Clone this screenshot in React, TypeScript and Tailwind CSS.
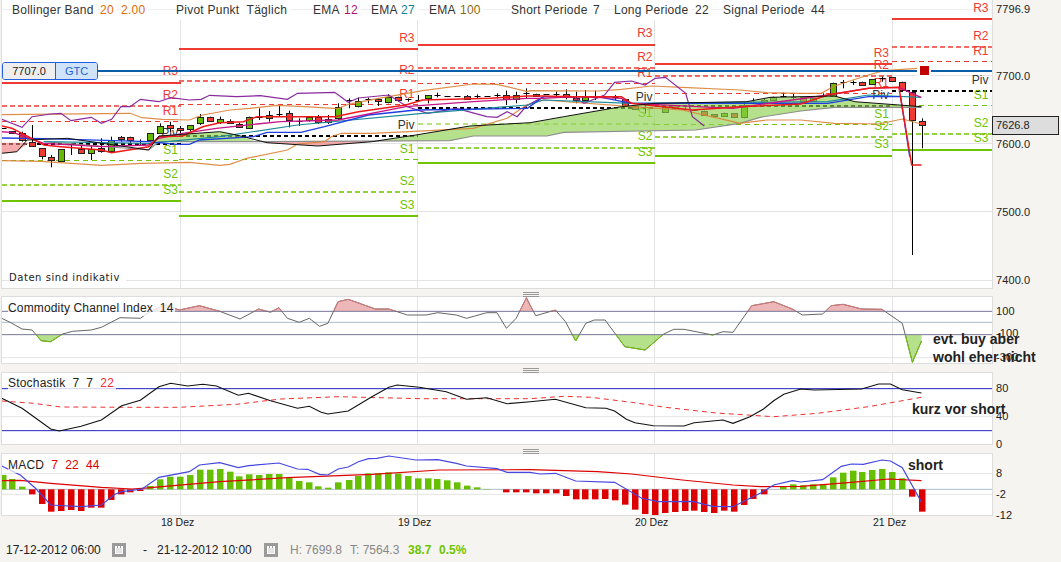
import React from "react";

const lx = (x: number) => x / 2.958;
const rx = (x: number) => 530 + x / 2.955;
const my = (y: number) => y / 3;
const sy = (y: number) => 285 + y / 3;

function pts(l: number[], r: number[], fy: (y: number) => number) {
  const o: string[] = [];
  for (let i = 0; i < l.length; i += 2) o.push(`${lx(l[i]).toFixed(1)},${fy(l[i + 1]).toFixed(1)}`);
  for (let i = 0; i < r.length; i += 2) o.push(`${rx(r[i]).toFixed(1)},${fy(r[i + 1]).toFixed(1)}`);
  return o.join(" ");
}

const RED = "#ef3b33";
const GREEN = "#6fc400";
const GRID = "#e4e4e4";

type Day = { x1: number; x2: number; lab: number; ys: number[]; ly: number[] };
const days: Day[] = [
  { x1: 2, x2: 181, lab: 178, ys: [83, 106, 121.5, 144, 160.5, 185, 201], ly: [71, 95, 111, 133, 150, 174, 190] },
  { x1: 179, x2: 418, lab: 414.5, ys: [49, 81, 104.5, 136, 159.5, 192, 216], ly: [38, 70, 94, 125, 149, 181, 205] },
  { x1: 418, x2: 655, lab: 652.5, ys: [45, 68, 83.5, 108, 124, 148, 163], ly: [33, 57, 73, 97, 113, 136, 152] },
  { x1: 655, x2: 892, lab: 889, ys: [64, 76, 93.5, 106, 124.5, 137, 156], ly: [53, 65, 83, 95, 114, 126, 144] },
  { x1: 892, x2: 992, lab: 988.5, ys: [19, 47, 61.5, 91, 105.5, 134, 150], ly: [8, 36, 51, 80, 95, 123, 138] },
];
const labels = ["R3", "R2", "R1", "Piv", "S1", "S2", "S3"];
const labelCol = [RED, RED, RED, "#333333", GREEN, GREEN, GREEN];
const lineCol = [RED, RED, RED, "#000000", GREEN, GREEN, GREEN];
const lineW = [2, 1.5, 1, 2, 1, 1.5, 2];
const lineDash = [undefined, "5 3", "5 4", "4 3", "5 4", "5 3", undefined];

type C = [number, number, number, number, number, string];
const candlesL: C[] = [
  [8, 385, 385, 385, 385, "k"], [36, 393, 400, 393, 400, "r"], [65, 395, 425, 400, 420, "r"], [94, 375, 440, 425, 438, "r"],
  [123, 445, 478, 445, 470, "r"], [152, 465, 502, 472, 480, "r"], [181, 448, 485, 448, 483, "g"], [210, 430, 465, 433, 433, "k"],
  [240, 430, 462, 448, 460, "r"], [269, 435, 480, 448, 460, "g"], [298, 415, 458, 445, 455, "r"], [327, 410, 455, 420, 452, "g"],
  [357, 408, 425, 412, 418, "r"], [386, 410, 430, 412, 420, "r"], [415, 418, 435, 424, 424, "k"], [445, 400, 425, 400, 422, "g"],
  [474, 370, 400, 378, 398, "g"], [503, 365, 395, 376, 386, "r"], [533, 378, 400, 385, 392, "r"], [562, 376, 395, 376, 388, "g"],
  [592, 342, 375, 352, 370, "g"], [621, 350, 362, 350, 362, "r"], [650, 350, 372, 358, 366, "g"], [679, 358, 372, 362, 368, "r"],
  [708, 368, 382, 373, 381, "r"], [738, 350, 385, 350, 382, "g"], [767, 325, 360, 352, 352, "k"], [796, 333, 365, 346, 354, "g"],
  [825, 317, 350, 342, 342, "k"], [855, 332, 382, 340, 360, "r"], [884, 355, 378, 362, 362, "k"], [913, 350, 365, 352, 360, "g"],
  [942, 345, 372, 352, 368, "r"], [971, 345, 372, 358, 368, "r"], [1001, 310, 360, 320, 352, "g"], [1031, 295, 325, 300, 300, "k"],
  [1060, 293, 322, 302, 318, "g"], [1089, 293, 310, 296, 296, "k"], [1118, 295, 318, 298, 305, "r"], [1148, 283, 310, 290, 304, "g"],
  [1177, 290, 305, 290, 300, "r"], [1206, 295, 305, 298, 298, "k"], [1235, 285, 303, 300, 300, "k"], [1265, 285, 310, 286, 296, "g"],
  [1294, 278, 292, 285, 285, "k"], [1323, 287, 287, 287, 287, "k"], [1352, 288, 288, 288, 288, "k"], [1381, 285, 298, 287, 295, "r"],
  [1410, 283, 295, 288, 288, "k"], [1440, 289, 289, 289, 289, "k"], [1469, 280, 295, 285, 285, "k"], [1498, 272, 315, 285, 298, "r"],
  [1527, 275, 310, 285, 297, "g"], [1557, 265, 295, 280, 280, "k"],
];
const candlesR: C[] = [
  [17, 281, 288, 281, 288, "r"], [46, 282, 282, 282, 282, "k"], [76, 275, 290, 282, 282, "k"], [105, 268, 298, 281, 290, "r"],
  [135, 275, 310, 295, 302, "r"], [164, 270, 305, 292, 302, "g"], [193, 272, 300, 288, 288, "k"], [222, 288, 288, 288, 288, "k"],
  [251, 285, 300, 290, 290, "k"], [280, 298, 318, 298, 318, "r"], [310, 318, 328, 318, 328, "r"], [339, 310, 340, 322, 322, "k"],
  [398, 320, 335, 320, 335, "g"], [427, 316, 324, 316, 324, "r"], [457, 315, 332, 328, 328, "k"], [486, 330, 330, 330, 330, "k"],
  [515, 332, 343, 332, 343, "r"], [544, 343, 349, 343, 349, "r"], [573, 338, 346, 338, 346, "g"], [602, 340, 352, 340, 352, "r"],
  [632, 310, 355, 315, 352, "g"], [660, 295, 310, 305, 305, "k"], [690, 295, 310, 300, 306, "g"], [719, 290, 300, 290, 300, "g"],
  [748, 278, 292, 288, 288, "k"], [777, 282, 298, 290, 290, "k"], [806, 290, 306, 290, 306, "r"], [836, 295, 305, 295, 305, "g"],
  [866, 280, 292, 288, 288, "k"], [895, 248, 288, 248, 288, "g"], [924, 240, 265, 245, 245, "k"], [953, 242, 255, 245, 245, "k"],
  [982, 245, 258, 247, 255, "r"], [1011, 238, 252, 238, 252, "g"], [1040, 230, 245, 235, 235, "k"], [1069, 232, 245, 232, 245, "r"],
  [1098, 245, 275, 245, 270, "r"], [1128, 270, 765, 275, 358, "r"], [1157, 355, 445, 362, 373, "r"],
];

const mainLines: { l: number[]; r: number[]; c: string; w: number }[] = [
  { c: "#db8236", w: 1.2, l: [5, 344, 385, 340, 420, 353, 480, 358, 560, 360, 600, 345, 680, 330, 740, 325, 820, 316, 900, 320, 1000, 326, 1030, 313, 1120, 295, 1250, 272, 1400, 252, 1470, 253, 1560, 275], r: [0, 272, 200, 273, 270, 268, 360, 258, 450, 262, 620, 270, 700, 278, 800, 280, 860, 280, 900, 258, 1000, 225, 1045, 212, 1145, 205] },
  { c: "#db8236", w: 1.2, l: [5, 482, 120, 484, 300, 496, 420, 490, 560, 487, 650, 496, 680, 493, 730, 475, 850, 450, 880, 432, 960, 425, 980, 410, 1010, 400, 1100, 400, 1210, 395, 1400, 385, 1500, 355, 1557, 315], r: [40, 300, 300, 320, 450, 330, 600, 365, 620, 370, 700, 360, 800, 360, 900, 370, 1030, 372, 1100, 357, 1157, 372] },
  { c: "#8a2a9e", w: 1.2, l: [5, 358, 65, 382, 95, 350, 150, 342, 180, 340, 210, 362, 270, 352, 300, 370, 330, 358, 358, 320, 385, 320, 415, 298, 470, 305, 505, 293, 560, 300, 595, 298, 620, 286, 700, 290, 770, 287, 850, 298, 880, 280, 990, 277, 1030, 307, 1060, 294, 1150, 285, 1205, 320, 1265, 340, 1350, 325, 1440, 350, 1470, 352, 1500, 335, 1530, 350, 1557, 318], r: [40, 290, 75, 290, 130, 292, 160, 310, 220, 285, 250, 247, 300, 243, 340, 255, 370, 235, 400, 232, 460, 280, 480, 350, 515, 378] },
  { c: "#1d8a9a", w: 1.2, l: [130, 425, 440, 430, 650, 410, 880, 375, 1250, 340, 1560, 315], r: [40, 300, 300, 310, 880, 305, 1000, 285, 1157, 292] },
  { c: "#1f3fe0", w: 1.3, l: [5, 414, 130, 416, 440, 425, 520, 433, 560, 433, 590, 420, 750, 410, 790, 397, 890, 397, 960, 380, 1090, 345, 1230, 330, 1560, 325], r: [40, 290, 100, 290, 200, 290, 300, 310, 560, 310, 880, 310, 950, 298, 1000, 290, 1095, 290, 1122, 470] },
  { c: "#c71585", w: 1.3, l: [5, 395, 40, 398, 130, 430, 300, 440, 440, 435, 470, 415, 540, 400, 640, 385, 760, 372, 830, 365, 1000, 360, 1200, 320, 1400, 305, 1560, 295], r: [40, 295, 130, 290, 270, 295, 300, 310, 600, 325, 880, 285, 1000, 265, 1090, 262, 1155, 292] },
  { c: "#f01818", w: 1.5, l: [5, 378, 35, 385, 65, 400, 130, 435, 180, 440, 300, 450, 330, 458, 440, 440, 470, 410, 540, 408, 600, 380, 650, 368, 720, 365, 760, 350, 990, 350, 1060, 335, 1200, 315, 1250, 300, 1450, 295, 1560, 288], r: [40, 288, 120, 290, 270, 290, 300, 310, 480, 330, 620, 320, 800, 312, 880, 285, 1000, 265, 1090, 262, 1128, 495, 1157, 495] },
];

const cci = {
  l: [5, 100, 30, 112, 65, 132, 95, 135, 122, 167, 150, 170, 185, 147, 215, 139, 270, 135, 300, 127, 355, 98, 415, 100, 445, 79, 490, 60, 530, 75, 590, 62, 650, 79, 710, 102, 765, 72, 800, 82, 825, 68, 850, 100, 885, 112, 915, 100, 945, 124, 970, 115, 1000, 50, 1030, 43, 1110, 72, 1150, 72, 1205, 90, 1260, 90, 1295, 83, 1350, 90, 1380, 100, 1440, 83, 1470, 83, 1498, 130, 1527, 100, 1557, 38],
  r: [0, 60, 17, 92, 75, 75, 105, 110, 135, 168, 165, 115, 190, 105, 222, 105, 280, 185, 340, 195, 395, 147, 425, 133, 455, 133, 540, 150, 570, 140, 600, 142, 655, 62, 720, 50, 775, 72, 805, 90, 865, 87, 890, 62, 925, 58, 980, 72, 1040, 73, 1100, 115, 1130, 232, 1157, 168],
};

const macdL: [number, number][] = [[8, 570], [36, 582], [65, 605], [94, 628], [123, 657], [152, 680], [181, 678], [210, 675], [240, 678], [269, 668], [298, 668], [327, 645], [357, 628], [386, 622], [415, 618], [445, 603], [474, 583], [503, 575], [533, 575], [562, 570], [592, 554], [621, 554], [650, 552], [679, 560], [708, 574], [738, 568], [767, 570], [796, 567], [825, 567], [855, 578], [884, 588], [913, 592], [942, 604], [971, 608], [1001, 592], [1031, 585], [1060, 573], [1089, 565], [1118, 565], [1148, 562], [1177, 566], [1206, 573], [1235, 580], [1265, 580], [1294, 582], [1323, 586], [1352, 592], [1381, 602], [1410, 607], [1440, 612], [1498, 622], [1527, 622], [1557, 622]];
const macdR: [number, number][] = [[17, 625], [46, 625], [76, 625], [105, 633], [135, 643], [164, 643], [193, 643], [222, 642], [251, 646], [280, 659], [310, 674], [339, 687], [369, 690], [398, 684], [427, 681], [457, 678], [486, 677], [515, 681], [544, 684], [573, 677], [602, 680], [632, 660], [660, 642], [690, 628], [748, 603], [777, 598], [806, 601], [836, 598], [865, 597], [895, 577], [924, 563], [953, 557], [982, 561], [1011, 555], [1040, 552], [1069, 561], [1098, 580], [1128, 635], [1157, 680]];

function Candle({ c, fx }: { c: C; fx: (x: number) => number }) {
  const x = Math.round(fx(c[0])) + 0.5;
  const [, wt, wb, bt, bb, k] = c;
  return (
    <g>
      {wb > wt && <line x1={x} x2={x} y1={my(wt)} y2={my(wb)} stroke="#000" strokeWidth="1" />}
      {k === "k" ? (
        <line x1={x - 3} x2={x + 3} y1={Math.round(my(bt)) + 0.5} y2={Math.round(my(bt)) + 0.5} stroke="#000" strokeWidth="1" />
      ) : (
        <rect x={x - 3} y={Math.round(my(bt)) + 0.5} width="6" height={Math.max(2, Math.round(my(bb) - my(bt)))} fill={k === "r" ? RED : "#66bb00"} stroke="#222" strokeWidth="1" />
      )}
    </g>
  );
}

const vgrid = [180.5, 417.5, 654.5, 892.5];

function VGrid({ y1, y2 }: { y1: number; y2: number }) {
  return (
    <>
      {vgrid.map((x) => (
        <line key={x} x1={x} x2={x} y1={y1} y2={y2} stroke={GRID} />
      ))}
    </>
  );
}

function AxisLabel({ top, text }: { top: number; text: string }) {
  return (
    <span className="absolute left-[4px] -translate-y-1/2 text-[11px] leading-none tracking-[0.1px] text-[#222] whitespace-nowrap" style={{ top }}>
      {text}
    </span>
  );
}

function Cell({ className, children }: { className: string; children: React.ReactNode }) {
  return (
    <div className={className}>
      <span className="bg-white pr-[3px]">{children}</span>
    </div>
  );
}

function Grip() {
  return (
    <div className="absolute left-[521px] -top-[5px] flex w-[16px] flex-col gap-[1px]">
      <div className="h-px bg-[#999]" />
      <div className="h-px bg-[#999]" />
      <div className="h-px bg-[#999]" />
    </div>
  );
}

function MainChart() {
  return (
    <svg className="absolute inset-0 h-full w-full" viewBox="2 0 990 288">
      <line x1="2" x2="992" y1="9.5" y2="9.5" stroke="#eeeeee" />
      {[75.5, 143.5, 211.5, 280.5].map((y) => (
        <line key={y} x1="2" x2="992" y1={y} y2={y} stroke={GRID} />
      ))}
      <VGrid y1={20} y2={288} />
      {days.map((d, i) =>
        d.ys.map((y, j) => (
          <line key={`${i}-${j}`} x1={d.x1} x2={d.x2} y1={y} y2={y} stroke={lineCol[j]} strokeWidth={lineW[j]} strokeDasharray={lineDash[j]} />
        )),
      )}
      {days.map((d, i) =>
        d.ly.map((y, j) => (
          <text key={`${i}-${j}`} x={d.lab} y={y} textAnchor="end" dominantBaseline="central" fontSize="12" fill={labelCol[j]}>
            {labels[j]}
          </text>
        )),
      )}
      {candlesL.map((c, i) => (
        <Candle key={i} c={c} fx={lx} />
      ))}
      {candlesR.map((c, i) => (
        <Candle key={i} c={c} fx={rx} />
      ))}
      <polygon points={pts([5, 428, 85, 428, 50, 455, 20, 460, 5, 460], [], my)} fill="#f07f7f" fillOpacity="0.65" />
      <polygon points={pts([790, 428, 940, 438, 1100, 425, 1110, 423, 790, 424], [], my)} fill="#f07f7f" fillOpacity="0.65" />
      <polygon points={pts([460, 425, 470, 408, 650, 395, 700, 405, 760, 425], [], my)} fill="#8fd14f" fillOpacity="0.65" />
      <polygon
        points={pts([1110, 423, 1230, 405, 1390, 378, 1568, 368], [100, 350, 270, 320, 370, 310, 640, 305, 710, 292, 900, 288, 960, 305, 1157, 320, 1157, 322, 900, 322, 800, 333, 680, 352, 620, 370, 490, 390, 100, 397, 50, 408, 0, 408], my) + ` ${lx(1400)},${my(408)} ${lx(1330)},${my(422)}`}
        fill="#8fd14f"
        fillOpacity="0.65"
      />
      <polyline points={pts([130, 425, 440, 450, 470, 425, 760, 425, 1330, 422, 1400, 408, 1568, 408], [0, 408, 50, 408, 100, 397, 490, 390, 620, 370, 680, 352, 800, 333, 900, 322, 1157, 322], my)} fill="none" stroke="#8d8d8d" strokeWidth="1.2" />
      {mainLines.map((m, i) => (
        <polyline key={i} points={pts(m.l, m.r, my)} fill="none" stroke={m.c} strokeWidth={m.w} strokeOpacity={i < 2 ? 0.9 : 1} />
      ))}
      <polyline points={pts([5, 460, 50, 455, 80, 420, 200, 415, 440, 450, 470, 408, 650, 395, 700, 405, 790, 428, 940, 438, 1100, 425, 1230, 405, 1390, 378, 1568, 368], [100, 350, 270, 320, 370, 310, 640, 305, 710, 292, 900, 288, 960, 305, 1157, 320], my)} fill="none" stroke="#111" strokeWidth="1" />
      <line x1="98" x2="917" y1="71" y2="71" stroke="#0a5ea8" strokeWidth="2" />
      <line x1="931" x2="992" y1="71" y2="71" stroke="#0a5ea8" strokeWidth="2" />
      <rect x="917" y="64" width="14" height="13" fill="#ffffff" />
      <rect x="920" y="66" width="9" height="9" fill="#c40000" />
    </svg>
  );
}

function CciChart() {
  const line = pts(cci.l, cci.r, sy);
  const first = `${lx(5).toFixed(1)},`;
  const last = `${rx(1157).toFixed(1)},`;
  const closedUp = `${first}${sy(79)} ${line} ${last}${sy(79)}`;
  const closedDown = `${first}${sy(149)} ${line} ${last}${sy(149)}`;
  return (
    <svg className="absolute inset-0 h-full w-full" viewBox="2 297 990 66">
      <defs>
        <clipPath id="cciUp"><rect x="0" y="290" width="992" height={sy(79) - 290} /></clipPath>
        <clipPath id="cciDown"><rect x="0" y={sy(149)} width="992" height="40" /></clipPath>
      </defs>
      <VGrid y1={297} y2={363} />
      <line x1="2" x2="992" y1={sy(218)} y2={sy(218)} stroke={GRID} />
      <polygon points={closedUp} fill="#e07b7b" fillOpacity="0.55" clipPath="url(#cciUp)" />
      <polygon points={closedDown} fill="#8fd14f" fillOpacity="0.65" clipPath="url(#cciDown)" />
      <line x1="2" x2="992" y1={sy(79)} y2={sy(79)} stroke="#77779a" />
      <line x1="2" x2="992" y1={sy(112)} y2={sy(112)} stroke="#aebccb" />
      <line x1="2" x2="992" y1={sy(149)} y2={sy(149)} stroke="#77779a" />
      <polyline points={line} fill="none" stroke="#666" strokeWidth="1" />
      <polyline points={line} fill="none" stroke="#d87a7a" strokeWidth="1" clipPath="url(#cciUp)" />
      <polyline points={line} fill="none" stroke="#6fc400" strokeWidth="1" clipPath="url(#cciDown)" />
    </svg>
  );
}

function StochChart() {
  return (
    <svg className="absolute inset-0 h-full w-full" viewBox="2 373 990 71">
      <VGrid y1={373} y2={444} />
      <line x1="2" x2="992" y1={sy(395)} y2={sy(395)} stroke={GRID} />
      <line x1="2" x2="992" y1={sy(311)} y2={sy(311)} stroke="#2424c0" />
      <line x1="2" x2="992" y1={sy(437)} y2={sy(437)} stroke="#2424c0" />
      <polyline points={pts([5, 348, 100, 355, 180, 366, 400, 367, 530, 367, 700, 358, 830, 342, 1000, 335, 1250, 341, 1568, 341], [100, 334, 180, 337, 300, 352, 400, 367, 550, 384, 720, 395, 850, 385, 1000, 365, 1157, 337], sy)} fill="none" stroke="#f03030" strokeDasharray="5 4" />
      <polyline points={pts([5, 340, 65, 370, 100, 395, 150, 432, 175, 438, 240, 424, 300, 405, 360, 362, 415, 346, 470, 305, 505, 295, 555, 303, 600, 298, 640, 303, 705, 331, 735, 325, 800, 347, 880, 370, 915, 364, 950, 382, 970, 387, 1030, 378, 1100, 335, 1150, 307, 1175, 300, 1240, 307, 1320, 320, 1380, 343, 1440, 338, 1500, 356, 1568, 350], [75, 343, 165, 368, 225, 370, 250, 378, 285, 403, 310, 413, 365, 422, 455, 423, 485, 413, 570, 405, 600, 415, 650, 395, 690, 372, 720, 347, 750, 328, 800, 312, 840, 315, 980, 312, 1030, 297, 1065, 297, 1100, 314, 1157, 324], sy)} fill="none" stroke="#111" strokeWidth="1.1" />
    </svg>
  );
}

function Bar({ x, top }: { x: number; top: number }) {
  const base = sy(613);
  const t = sy(top);
  const up = t < base;
  const xx = Math.round(x) - 3;
  return <rect x={xx} y={up ? t : base} width="6.5" height={Math.abs(base - t)} fill={up ? "#66bf00" : "#dd0000"} />;
}

function MacdChart() {
  return (
    <svg className="absolute inset-0 h-full w-full" viewBox="2 454 990 61">
      <VGrid y1={454} y2={515} />
      <line x1="2" x2="992" y1={sy(566)} y2={sy(566)} stroke={GRID} />
      <line x1="2" x2="992" y1={sy(628)} y2={sy(628)} stroke={GRID} />
      <line x1="2" x2="992" y1={sy(613)} y2={sy(613)} stroke="#aebccb" />
      {macdL.map(([x, t], i) => (
        <Bar key={i} x={lx(x)} top={t} />
      ))}
      {macdR.map(([x, t], i) => (
        <Bar key={i} x={rx(x)} top={t} />
      ))}
      <polyline points={pts([5, 587, 60, 586, 150, 595, 300, 607, 390, 612, 420, 610, 650, 590, 850, 578, 1100, 568, 1300, 555, 1568, 554], [200, 560, 300, 567, 450, 585, 600, 600, 680, 605, 800, 604, 950, 592, 1060, 582, 1157, 587], sy)} fill="none" stroke="#dd0000" strokeWidth="1.2" />
      <polyline points={pts([5, 543, 60, 570, 105, 610, 150, 660, 240, 665, 300, 660, 340, 628, 360, 620, 420, 612, 470, 577, 560, 560, 590, 540, 650, 533, 705, 548, 735, 542, 825, 534, 880, 552, 910, 553, 945, 568, 970, 570, 1000, 552, 1030, 546, 1060, 530, 1090, 521, 1115, 520, 1150, 513, 1230, 525, 1295, 524, 1350, 535, 1380, 543, 1470, 551, 1500, 562, 1568, 562], [30, 567, 75, 565, 135, 588, 250, 592, 330, 640, 380, 650, 480, 649, 540, 664, 600, 665, 680, 625, 720, 600, 775, 587, 800, 591, 865, 584, 920, 544, 950, 537, 985, 538, 1040, 525, 1065, 528, 1100, 548, 1157, 652], sy)} fill="none" stroke="#4646e0" strokeWidth="1.2" />
    </svg>
  );
}

function CalendarIcon() {
  return (
    <svg width="14" height="14" viewBox="0 0 14 14" className="shrink-0">
      <rect x="0" y="0" width="14" height="14" fill="#9a9a9a" />
      <rect x="3" y="3" width="8" height="8" fill="#ffffff" />
      <rect x="5" y="3" width="1" height="2" fill="#9a9a9a" />
      <rect x="8" y="3" width="1" height="2" fill="#9a9a9a" />
      <rect x="4" y="5" width="6" height="5" fill="#e4e4e4" />
    </svg>
  );
}

export default function App() {
  return (
    <div className="relative flex h-[562px] w-[1061px] flex-col overflow-hidden bg-[#f5f4f1] font-['Liberation_Sans',Arial,sans-serif] text-[#222]">
      {/* main */}
      <div className="flex h-[288px] pl-[2px]">
        <div className="relative h-full w-[990px] bg-white ring-1 ring-[#dddddd]">
          <MainChart />
          <div className="absolute left-[10px] top-0 flex h-[20px] items-center text-[12px] tracking-[0.25px] whitespace-nowrap text-[#333]">
            <Cell className="w-[88px]">Bollinger Band</Cell>
            <Cell className="w-[21px] text-[#e06a00]">20</Cell>
            <Cell className="w-[55px] text-[#e06a00]">2.00</Cell>
            <Cell className="w-[137px]">Pivot Punkt&nbsp;&nbsp;Täglich</Cell>
            <Cell className="w-[31px]">EMA</Cell>
            <Cell className="w-[27px] text-[#b0106e]">12</Cell>
            <Cell className="w-[30px]">EMA</Cell>
            <Cell className="w-[28px] text-[#0e7f96]">27</Cell>
            <Cell className="w-[31px]">EMA</Cell>
            <Cell className="w-[51px] text-[#8a6a10]">100</Cell>
            <Cell className="w-[82px]">Short Periode</Cell>
            <Cell className="w-[21px]">7</Cell>
            <Cell className="w-[81px]">Long Periode</Cell>
            <Cell className="w-[28px]">22</Cell>
            <Cell className="w-[88px]">Signal Periode</Cell>
            <Cell className="w-[20px]">44</Cell>
          </div>
          <div className="absolute left-0 top-[62px] flex h-[18px] w-[96px] overflow-hidden rounded-[3px] border border-[#1f5fe0] text-[11px] leading-[16px]">
            <div className="w-[53px] border-r border-[#1f5fe0] bg-[#eeeeee] text-center text-[#222]">7707.0</div>
            <div className="flex-1 bg-[#cfe3fb] text-center text-[#1d5fd0]">GTC</div>
          </div>
          <div className="absolute bottom-[3px] left-[7px] bg-white pr-[6px] font-['DejaVu_Sans',sans-serif] text-[10px] leading-[14px] tracking-[0.55px] text-[#222]">
            Daten sind indikativ
          </div>
        </div>
        <div className="relative h-full flex-1">
          <AxisLabel top={8.5} text="7796.9" />
          <AxisLabel top={75.5} text="7700.0" />
          <AxisLabel top={143.5} text="7600.0" />
          <AxisLabel top={211.5} text="7500.0" />
          <AxisLabel top={279.5} text="7400.0" />
          <div className="absolute left-0 top-[116px] h-[19px] w-[67px] border border-[#222] bg-[#dddddd] pl-[3px] text-[11px] leading-[17px] text-[#222]">
            7626.8
          </div>
        </div>
      </div>

      {/* CCI */}
      <div className="mt-[9px] flex h-[66px] pl-[2px]">
        <div className="relative h-full w-[990px] bg-white ring-1 ring-[#dddddd]">
          <Grip />
          <CciChart />
          <div className="absolute left-[6px] top-[3px] rounded-sm bg-white/80 pr-[2px] text-[12px] leading-[16px] tracking-[0.15px] text-[#222]">
            Commodity Channel Index&nbsp;&nbsp;14
          </div>
        </div>
        <div className="relative h-full flex-1">
          <AxisLabel top={14} text="100" />
          <AxisLabel top={36} text="-100" />
          <AxisLabel top={60} text="-300" />
        </div>
      </div>

      {/* Stochastik */}
      <div className="mt-[10px] flex h-[71px] pl-[2px]">
        <div className="relative h-full w-[990px] bg-white ring-1 ring-[#dddddd]">
          <Grip />
          <StochChart />
          <div className="absolute left-[6px] top-[2px] bg-white/80 pr-[2px] text-[12px] leading-[16px] tracking-[0.2px] text-[#222]">
            Stochastik&nbsp;&nbsp;7&nbsp;&nbsp;7&nbsp;&nbsp;<span className="text-[#f03030]">22</span>
          </div>
        </div>
        <div className="relative h-full flex-1">
          <AxisLabel top={14.5} text="80" />
          <AxisLabel top={43} text="40" />
          <AxisLabel top={71} text="0" />
        </div>
      </div>

      {/* MACD */}
      <div className="mt-[10px] flex h-[61px] pl-[2px]">
        <div className="relative h-full w-[990px] bg-white ring-1 ring-[#dddddd]">
          <Grip />
          <MacdChart />
          <div className="absolute left-[6px] top-[3px] bg-white/70 pr-[2px] text-[12px] leading-[16px] tracking-[0.2px] text-[#222]">
            MACD&nbsp;&nbsp;<span className="text-[#dd0000]">7&nbsp;&nbsp;22&nbsp;&nbsp;44</span>
          </div>
        </div>
        <div className="relative h-full flex-1">
          <AxisLabel top={19} text="8" />
          <AxisLabel top={40} text="-2" />
          <AxisLabel top={61} text="-12" />
        </div>
      </div>

      {/* date axis */}
      <div className="flex h-[16px] items-center pl-[161px] text-[10.5px] text-[#222]">
        <div className="w-[237px]">18 Dez</div>
        <div className="w-[237px]">19 Dez</div>
        <div className="w-[238px]">20 Dez</div>
        <div className="w-[100px]">21 Dez</div>
      </div>

      {/* footer */}
      <div className="mt-[11px] flex h-[15px] items-center pl-[6px] text-[12px] leading-none whitespace-nowrap">
        <div className="w-[106px] text-[#222]">17-12-2012 06:00</div>
        <CalendarIcon />
        <div className="ml-[17px] w-[14px] text-[#222]">-</div>
        <div className="w-[107px] text-[#222]">21-12-2012 10:00</div>
        <CalendarIcon />
        <div className="ml-[12px] w-[60px] text-[#888]">H: 7699.8</div>
        <div className="w-[58px] text-[#888]">T: 7564.3</div>
        <div className="w-[31px] font-bold text-[#6fc400]">38.7</div>
        <div className="font-bold text-[#6fc400]">0.5%</div>
      </div>

      {/* notes written over the chart */}
      <div className="absolute left-[933px] top-[330px] text-[14px] font-bold leading-[18px] text-[#222] whitespace-nowrap">
        evt. buy aber
        <br />
        wohl eher nicht
      </div>
      <div className="absolute left-[912px] top-[400px] text-[14px] font-bold leading-[18px] text-[#222] whitespace-nowrap">kurz vor short</div>
      <div className="absolute left-[908px] top-[456px] text-[14px] font-bold leading-[18px] text-[#222] whitespace-nowrap">short</div>
    </div>
  );
}
